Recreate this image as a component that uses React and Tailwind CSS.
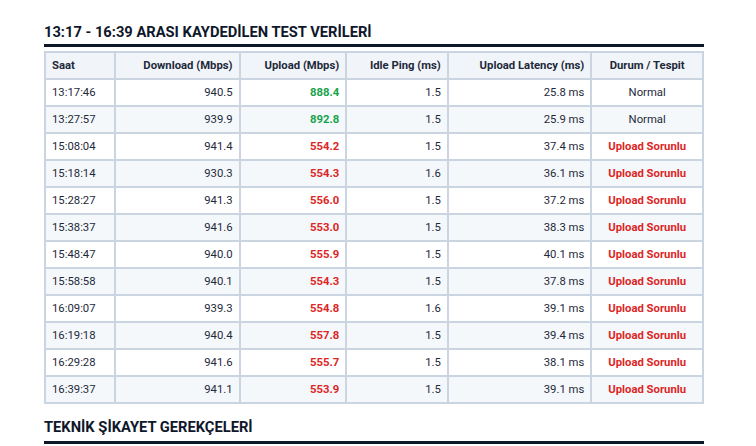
const rows = [
  ["13:17:46", "940.5", "888.4", "1.5", "25.8 ms", "Normal"],
  ["13:27:57", "939.9", "892.8", "1.5", "25.9 ms", "Normal"],
  ["15:08:04", "941.4", "554.2", "1.5", "37.4 ms", "Upload Sorunlu"],
  ["15:18:14", "930.3", "554.3", "1.6", "36.1 ms", "Upload Sorunlu"],
  ["15:28:27", "941.3", "556.0", "1.5", "37.2 ms", "Upload Sorunlu"],
  ["15:38:37", "941.6", "553.0", "1.5", "38.3 ms", "Upload Sorunlu"],
  ["15:48:47", "940.0", "555.9", "1.5", "40.1 ms", "Upload Sorunlu"],
  ["15:58:58", "940.1", "554.3", "1.5", "37.8 ms", "Upload Sorunlu"],
  ["16:09:07", "939.3", "554.8", "1.6", "39.1 ms", "Upload Sorunlu"],
  ["16:19:18", "940.4", "557.8", "1.5", "39.4 ms", "Upload Sorunlu"],
  ["16:29:28", "941.6", "555.7", "1.5", "38.1 ms", "Upload Sorunlu"],
  ["16:39:37", "941.1", "553.9", "1.5", "39.1 ms", "Upload Sorunlu"],
];

const cell = "border-2 border-[#cbd5e1] px-[6px] py-[6px] leading-[13px]";

export default function App() {
  return (
    <div className="bg-white w-[756px] h-[446px] overflow-hidden pl-[44px] pr-[52px] pt-[23px] text-[#0f172a]" style={{ fontFamily: "Roboto, 'Liberation Sans', sans-serif" }}>
      <h2 className="text-[14.7px] font-bold leading-[18px] pb-[3px] border-b-[3px] border-[#0f172a]">
        13:17 - 16:39 ARASI KAYDEDİLEN TEST VERİLERİ
      </h2>
      <table className="mt-[4px] w-[660px] border-collapse text-[11.3px] text-[#1e293b]">
        <colgroup>
          <col className="w-[70px]" />
          <col className="w-[125px]" />
          <col className="w-[107px]" />
          <col className="w-[102px]" />
          <col className="w-[144px]" />
          <col className="w-[112px]" />
        </colgroup>
        <thead>
          <tr className="bg-[#f1f5f9] font-bold">
            <th className={`${cell} text-left`}>Saat</th>
            <th className={`${cell} text-right`}>Download (Mbps)</th>
            <th className={`${cell} text-right`}>Upload (Mbps)</th>
            <th className={`${cell} text-right`}>Idle Ping (ms)</th>
            <th className={`${cell} text-right`}>Upload Latency (ms)</th>
            <th className={`${cell} text-center`}>Durum / Tespit</th>
          </tr>
        </thead>
        <tbody>
          {rows.map((r, i) => {
            const bad = r[5] !== "Normal";
            return (
              <tr key={i} className={i % 2 === 1 ? "bg-[#f5f8fa]" : "bg-white"}>
                <td className={`${cell} text-left`}>{r[0]}</td>
                <td className={`${cell} text-right`}>{r[1]}</td>
                <td className={`${cell} text-right font-bold ${bad ? "text-[#dc2626]" : "text-[#16a34a]"}`}>{r[2]}</td>
                <td className={`${cell} text-right`}>{r[3]}</td>
                <td className={`${cell} text-right`}>{r[4]}</td>
                <td className={`${cell} text-center ${bad ? "font-bold text-[#dc2626]" : ""}`}>{r[5]}</td>
              </tr>
            );
          })}
        </tbody>
      </table>
      <h2 className="mt-[14px] text-[14.7px] font-bold leading-[18px] pb-[5px] border-b-[3px] border-[#0f172a]">
        TEKNİK ŞİKAYET GEREKÇELERİ
      </h2>
    </div>
  );
}
